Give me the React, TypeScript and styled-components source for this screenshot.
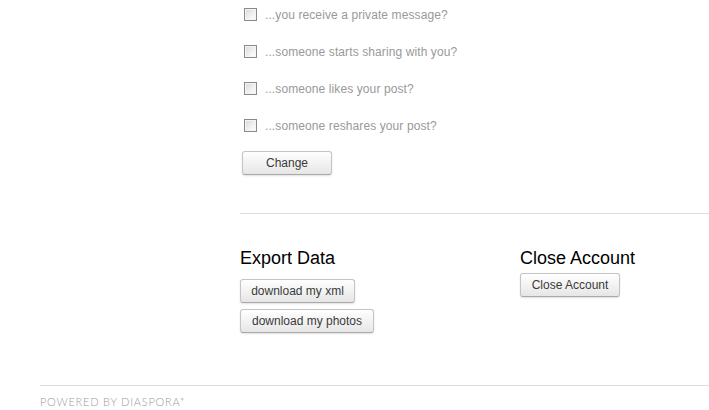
import * as React from 'react';
import styled, { createGlobalStyle } from 'styled-components';

const GlobalStyle = createGlobalStyle`
  html, body {
    margin: 0;
    padding: 0;
    background: #fff;
    overflow: hidden;
  }
  body {
    font-family: Arial, "Liberation Sans", sans-serif;
  }
`;

// ── Layout ─────────────────────────────
const Page = styled.div`
  width: 709px;
  padding-left: 40px;
  box-sizing: border-box;
`;

const Content = styled.div`
  margin-left: 200px;
`;

const OptionList = styled.div`
  display: flex;
  flex-direction: column;
  padding-left: 4px;
`;

const OptionRow = styled.label`
  display: flex;
  align-items: center;
  gap: 8px;
  height: 37px;
  box-sizing: border-box;
  padding: 7px 0 15px;
  font-size: 12px;
  letter-spacing: 0.1px;
  color: #999;
`;

const Box = styled.span`
  width: 13px;
  height: 13px;
  box-sizing: border-box;
  border: 1px solid #8a8a8a;
  background: linear-gradient(135deg, #d8d8d8 0%, #f2f2f2 60%, #ffffff 100%);
  box-shadow: inset 0 0 0 1px #f4f4f4;
  flex-shrink: 0;
`;

const Button = styled.button<{ $width: number }>`
  width: ${({ $width }) => $width}px;
  height: 24px;
  padding: 0;
  font-family: Arial, "Liberation Sans", sans-serif;
  font-size: 12px;
  color: #3a3a3a;
  background: linear-gradient(#ffffff, #e6e6e6);
  border: 1px solid #c4c4c4;
  border-bottom-color: #a8a8a8;
  border-radius: 3px;
  box-shadow: 0 1px 2px rgba(0, 0, 0, 0.12);
  cursor: pointer;
`;

const ChangeWrap = styled.div`
  padding: 3px 0 0 2px;
`;

const Divider = styled.hr`
  border: none;
  border-top: 1px solid #dddddd;
  margin: 38px -40px 0 0;
`;

const Columns = styled.div`
  display: grid;
  grid-template-columns: 280px 1fr;
  margin-top: 34px;
`;

const Column = styled.div`
  display: flex;
  flex-direction: column;
  align-items: flex-start;
`;

const Heading = styled.h3`
  margin: 0 0 5px 0;
  font-size: 18px;
  font-weight: normal;
  color: #000;
  line-height: 20px;
`;

const ButtonStack = styled.div`
  display: flex;
  flex-direction: column;
  gap: 6px;
  align-items: flex-start;
  margin-top: 6px;
`;

const Footer = styled.footer`
  margin-top: 52px;
  border-top: 1px solid #dddddd;
  padding-top: 9px;
  margin-right: -40px;
`;

const Powered = styled.div`
  font-family: Lato, "Open Sans", sans-serif;
  font-weight: 300;
  font-size: 11px;
  line-height: 13px;
  letter-spacing: 0.75px;
  color: #9a9a9a;
`;

const options = [
  '...you receive a private message?',
  '...someone starts sharing with you?',
  '...someone likes your post?',
  '...someone reshares your post?',
];

export default function App(): React.ReactElement {
  return (
    <>
      <GlobalStyle />
      <Page>
        <Content>
          <OptionList>
            {options.map((text) => (
              <OptionRow key={text}>
                <Box />
                {text}
              </OptionRow>
            ))}
          </OptionList>
          <ChangeWrap>
            <Button $width={90}>Change</Button>
          </ChangeWrap>
          <Divider />
          <Columns>
            <Column>
              <Heading>Export Data</Heading>
              <ButtonStack>
                <Button $width={115}>download my xml</Button>
                <Button $width={134}>download my photos</Button>
              </ButtonStack>
            </Column>
            <Column>
              <Heading>Close Account</Heading>
              <Button $width={100}>Close Account</Button>
            </Column>
          </Columns>
        </Content>
        <Footer>
          <Powered>POWERED BY DIASPORA*</Powered>
        </Footer>
      </Page>
    </>
  );
}
